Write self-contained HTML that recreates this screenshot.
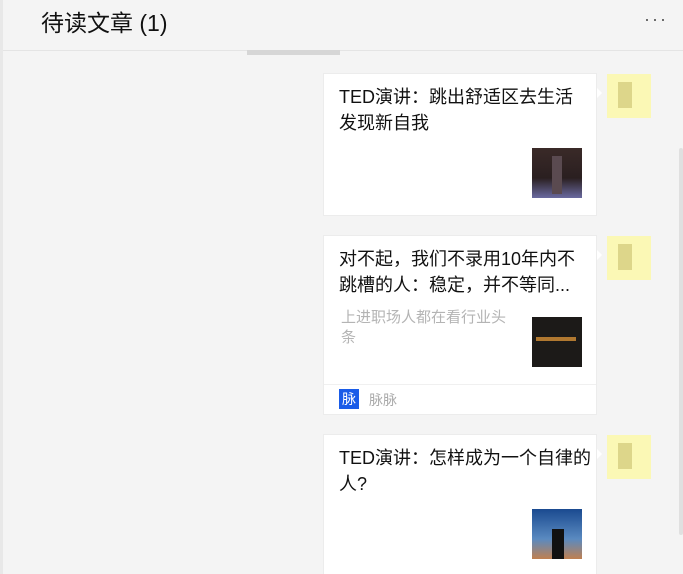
<html><head><style>
html,body{margin:0;width:683px;height:574px;overflow:hidden}
body{background:#f4f4f4;font-family:"Liberation Sans","Noto Sans CJK SC",sans-serif;position:relative}
.a{position:absolute}
.hd{left:0;top:0;width:683px;height:50px;border-bottom:1px solid #e4e4e4;background:#f4f4f4}
.card{position:absolute;left:323px;width:274px;background:#fff;border:1px solid #ececec;box-sizing:border-box}
.t{position:absolute;left:15px;top:10px;width:258px;font-size:18px;line-height:26px;color:#111;white-space:nowrap}
.th{position:absolute;left:208px;width:50px;height:50px}
.av{position:absolute;left:607px;width:44px;height:44px;background:#fbf8b5}
.av i{position:absolute;left:11px;top:8px;width:14px;height:26px;background:#ddd68a}
.tri{position:absolute;left:597px;width:0;height:0;border:5px solid transparent;border-left-color:#fff}
</style></head><body>
<div class="a hd"></div>
<div class="a" style="left:0;top:0;width:3px;height:574px;background:#e8e8e8"></div>
<div class="a" style="left:41px;top:4px;font-size:23px;color:#111">待读文章 (1)</div>
<div class="a" style="left:644px;top:9px;font-size:18px;color:#555;letter-spacing:2px">···</div>
<div class="a" style="left:247px;top:50px;width:93px;height:5px;background:#d6d6d6"></div>
<div class="a" style="left:679px;top:148px;width:4px;height:387px;background:#e0e0e0;border-radius:2px"></div>

<div class="card" style="top:73px;height:143px"><div class="t">TED演讲：跳出舒适区去生活<br>发现新自我</div>
<div class="th" style="top:74px;background:linear-gradient(#3a2a28,#2a1f20 60%,#6a6aa0)"><div class="a" style="left:20px;top:8px;width:10px;height:38px;background:#5a4a50"></div></div></div>
<div class="tri" style="top:88px"></div>
<div class="av" style="top:74px"><i></i></div>

<div class="card" style="top:235px;height:180px"><div class="t">对不起，我们不录用10年内不<br>跳槽的人：稳定，并不等同...</div>
<div class="a" style="left:17px;top:72px;width:168px;font-size:15px;line-height:20px;color:#b4b4b4">上进职场人都在看行业头条</div>
<div class="th" style="top:81px;background:#1c1a18"><div class="a" style="left:4px;top:20px;width:40px;height:4px;background:#b07830"></div></div>
<div class="a" style="left:0;top:148px;width:272px;height:1px;background:#f0f0f0"></div>
<div class="a" style="left:15px;top:153px;width:20px;height:20px;background:#1a5ce8;color:#fff;font-size:14px;line-height:20px;text-align:center">脉</div>
<div class="a" style="left:45px;top:154px;font-size:14px;color:#aaa">脉脉</div></div>
<div class="tri" style="top:250px"></div>
<div class="av" style="top:236px"><i></i></div>

<div class="card" style="top:434px;height:150px"><div class="t">TED演讲：怎样成为一个自律的<br>人?</div>
<div class="th" style="top:74px;background:linear-gradient(#1a4a90,#5a8ac0 60%,#c08050)"><div class="a" style="left:20px;top:20px;width:12px;height:30px;background:#111"></div></div></div>
<div class="tri" style="top:449px"></div>
<div class="av" style="top:435px"><i></i></div>
</body></html>
